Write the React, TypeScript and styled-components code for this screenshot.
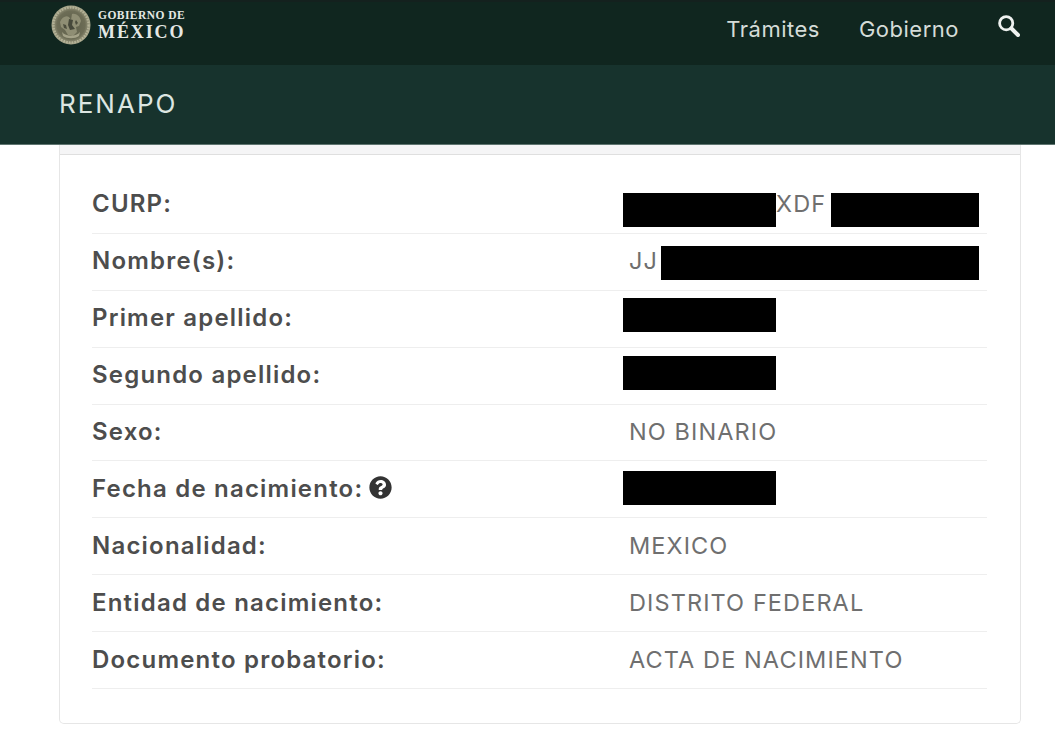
import styled, { createGlobalStyle } from "styled-components";
import { FaQuestionCircle } from "react-icons/fa";

const GlobalStyle = createGlobalStyle`
  html, body {
    margin: 0;
    padding: 0;
    background: #fff;
    overflow: hidden;
  }
  * {
    box-sizing: border-box;
  }
`;

const Page = styled.div`
  width: 1055px;
  height: 737px;
  font-family: "Inter", "Liberation Sans", sans-serif;
`;

const NavBar = styled.header`
  height: 65px;
  padding: 3px 35px 0 51px;
  display: flex;
  align-items: flex-start;
  justify-content: space-between;
  background: #10261f;
  border-top: 2px solid #14211e;
`;

const Brand = styled.div`
  display: flex;
  align-items: center;
  gap: 7px;
`;

const BrandText = styled.div`
  display: flex;
  flex-direction: column;
  font-family: "Liberation Serif", serif;
  font-weight: 700;
  color: #e4e8e4;
`;

const BrandTop = styled.span`
  font-size: 11.5px;
  line-height: 13px;
  letter-spacing: 0.45px;
`;

const BrandBottom = styled.span`
  font-size: 18px;
  line-height: 20px;
  letter-spacing: 1.9px;
`;

const NavLinks = styled.nav`
  display: flex;
  align-items: center;
  gap: 39px;
  height: 48px;
  color: #d5dcd8;
`;

const NavLink = styled.span`
  font-size: 22px;
  font-weight: 400;
  letter-spacing: 0.5px;
`;

const SearchIcon = styled.svg`
  display: block;
  color: #eef1ef;
  transform: translateY(-3px);
`;

const SubBar = styled.div`
  height: 80px;
  padding-left: 59px;
  padding-bottom: 2px;
  display: flex;
  align-items: center;
  background: #17332d;
  border-bottom: 1px solid #5f7570;
  color: #dce6e2;
  font-size: 26px;
  letter-spacing: 2px;
`;

const Card = styled.section`
  width: 962px;
  height: 579px;
  margin-left: 59px;
  border: 1px solid #e6e6e6;
  border-top: 0;
  border-radius: 0 0 5px 5px;
`;

const CardHeading = styled.div`
  height: 10px;
  background: #f5f5f6;
  border-bottom: 1px solid #dfdfdf;
`;

const Rows = styled.div`
  padding: 22px 33px 0 32px;
`;

const Row = styled.div`
  height: 56.9px;
  padding-bottom: 2px;
  display: grid;
  grid-template-columns: 537px 1fr;
  align-items: center;
  border-bottom: 1px solid #eeeeee;
`;

const Label = styled.div`
  display: flex;
  align-items: center;
  gap: 6px;
  font-size: 24px;
  font-weight: 600;
  letter-spacing: 1.2px;
  color: #4d4d4d;
`;

const HelpIcon = styled.span`
  display: flex;
  font-size: 23px;
  color: #333;
  transform: translateY(-1px);
`;

const Value = styled.div`
  display: flex;
  align-items: center;
  font-size: 23.5px;
  font-weight: 400;
  letter-spacing: 1.1px;
  color: #6f6f6f;
`;

const Redacted = styled.span<{ $width: number; $gap: number; $nudge: number }>`
  display: block;
  flex: none;
  width: ${(p) => p.$width}px;
  height: 34px;
  background: #000;
  margin-left: ${(p) => p.$gap}px;
  transform: translateY(${(p) => p.$nudge}px);
`;

function Seal() {
  return (
    <svg width="40" height="40" viewBox="0 0 40 40">
      <defs>
        <radialGradient id="seal" cx="50%" cy="50%" r="50%">
          <stop offset="0%" stopColor="#5c5d49" />
          <stop offset="72%" stopColor="#6d6d56" />
          <stop offset="100%" stopColor="#a9a78c" />
        </radialGradient>
      </defs>
      <circle cx="20" cy="20" r="19.5" fill="url(#seal)" />
      <circle cx="20" cy="20" r="17.6" fill="none" stroke="#b5b398" strokeWidth="2.4" strokeDasharray="1.6 1.2" />
      <path d="M9 17c2-5 6-7 9-5l2 3 1-6c4-1 8 2 9 7l-2 5-3 1 1 5-4 4-5-1-3-5-4-3z" fill="#8f8e74" />
      <path d="M11 27c4 5 14 5 18 0l-1 4c-4 3-12 3-16 0z" fill="#a5a389" />
      <path d="M18 14l4 1-1 5 3 4-5 1-2-5z" fill="#46483a" />
      <path d="M12 19l3 1 1 4-3-1zM25 15l2 3-2 2-1-3z" fill="#4c4d3d" />
    </svg>
  );
}

const rows = [
  {
    label: "CURP:",
    value: (
      <>
        <Redacted $width={153} $gap={-6} $nudge={6} />
        XDF
        <Redacted $width={148} $gap={5} $nudge={6} />
      </>
    ),
  },
  {
    label: "Nombre(s):",
    value: (
      <>
        JJ
        <Redacted $width={318} $gap={3} $nudge={2} />
      </>
    ),
  },
  { label: "Primer apellido:", value: <Redacted $width={153} $gap={-6} $nudge={-3} /> },
  { label: "Segundo apellido:", value: <Redacted $width={153} $gap={-6} $nudge={-2} /> },
  { label: "Sexo:", value: "NO BINARIO" },
  { label: "Fecha de nacimiento:", help: true, value: <Redacted $width={153} $gap={-6} $nudge={0} /> },
  { label: "Nacionalidad:", value: "MEXICO" },
  { label: "Entidad de nacimiento:", value: "DISTRITO FEDERAL" },
  { label: "Documento probatorio:", value: "ACTA DE NACIMIENTO" },
];

export default function App() {
  return (
    <Page>
      <GlobalStyle />
      <NavBar>
        <Brand>
          <Seal />
          <BrandText>
            <BrandTop>GOBIERNO DE</BrandTop>
            <BrandBottom>MÉXICO</BrandBottom>
          </BrandText>
        </Brand>
        <NavLinks>
          <NavLink>Trámites</NavLink>
          <NavLink>Gobierno</NavLink>
          <SearchIcon width="22" height="22" viewBox="0 0 22 22" fill="none" stroke="currentColor">
            <circle cx="8.2" cy="8.2" r="6.6" strokeWidth="2.8" />
            <line x1="13.5" y1="13.5" x2="20" y2="20" strokeWidth="4" strokeLinecap="round" />
          </SearchIcon>
        </NavLinks>
      </NavBar>
      <SubBar>RENAPO</SubBar>
      <Card>
        <CardHeading />
        <Rows>
          {rows.map((row) => (
            <Row key={row.label}>
              <Label>
                {row.label}
                {row.help && (
                  <HelpIcon>
                    <FaQuestionCircle />
                  </HelpIcon>
                )}
              </Label>
              <Value>{row.value}</Value>
            </Row>
          ))}
        </Rows>
      </Card>
    </Page>
  );
}
